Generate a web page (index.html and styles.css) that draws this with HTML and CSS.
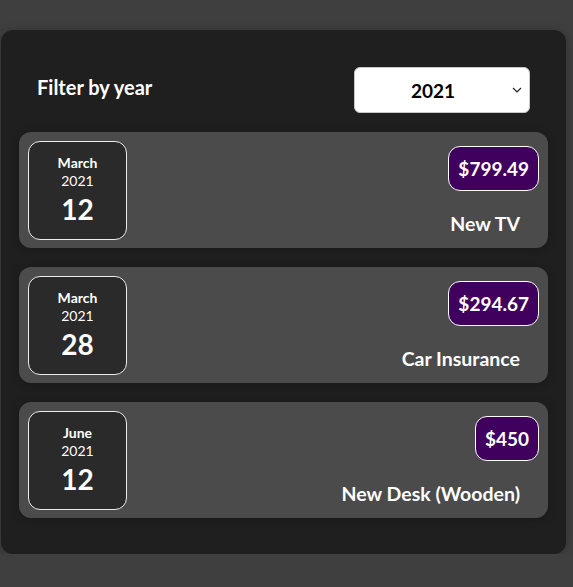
FILE: index.html
```html
<!DOCTYPE html>
<html lang="en">
<head>
    <meta charset="UTF-8">
    <meta name="viewport" content="width=device-width, initial-scale=1.0">
    <title>Expenses</title>
    <link rel="stylesheet" href="styles.css">
</head>
<body>
    <div class="expenses">
        <div class="expenses-filter">
            <div class="expenses-filter__control">
                <label for="year">Filter by year</label>
                <select id="year">
                    <option value="2022">2022</option>
                    <option value="2021" selected>2021</option>
                    <option value="2020">2020</option>
                    <option value="2019">2019</option>
                </select>
            </div>
        </div>

        <ul class="expenses-list">
            <li class="expense-item">
                <div class="expense-date">
                    <div class="expense-date__month">March</div>
                    <div class="expense-date__year">2021</div>
                    <div class="expense-date__day">12</div>
                </div>
                <div class="expense-item__description">
                    <div class="expense-item__price">$799.49</div>
                    <h2>New TV</h2>
                </div>
            </li>
            <li class="expense-item">
                <div class="expense-date">
                    <div class="expense-date__month">March</div>
                    <div class="expense-date__year">2021</div>
                    <div class="expense-date__day">28</div>
                </div>
                <div class="expense-item__description">
                    <div class="expense-item__price">$294.67</div>
                    <h2>Car Insurance</h2>
                </div>
            </li>
            <li class="expense-item">
                <div class="expense-date">
                    <div class="expense-date__month">June</div>
                    <div class="expense-date__year">2021</div>
                    <div class="expense-date__day">12</div>
                </div>
                <div class="expense-item__description">
                    <div class="expense-item__price">$450</div>
                    <h2>New Desk (Wooden)</h2>
                </div>
            </li>
        </ul>
    </div>
</body>
</html>
```

FILE: styles.css
```css
* {
    box-sizing: border-box;
}

body {
    margin: 0;
    background: #3f3f3f;
    font-family: Lato, "Open Sans", sans-serif;
}

.expenses {
    width: 565px;
    margin: 30px 0 0 1px;
    padding: 18px;
    background-color: #1f1f1f;
    border-radius: 12px;
    box-shadow: 0 1px 8px rgba(0, 0, 0, 0.25);
}

.expenses-filter {
    color: white;
    padding: 0 18px;
}

.expenses-filter__control {
    display: flex;
    align-items: center;
    justify-content: space-between;
    margin: 19px 0 19px;
}

.expenses-filter label {
    font-size: 20px;
    font-weight: bold;
    margin-top: -6px;
}

.expenses-filter select {
    width: 176px;
    height: 46px;
    padding: 0 0 0 56px;
    font-family: inherit;
    font-size: 19px;
    font-weight: bold;
    color: #000;
    background: #fff url("data:image/svg+xml;charset=UTF-8,%3csvg xmlns='http://www.w3.org/2000/svg' viewBox='0 0 10 6'%3e%3cpath d='M1 1l4 4 4-4' fill='none' stroke='%23222' stroke-width='1.2'/%3e%3c/svg%3e") no-repeat right 7px center / 10px 6px;
    border: 1px solid #c8c8c8;
    border-radius: 6px;
    appearance: none;
    -webkit-appearance: none;
}

.expenses-list {
    list-style: none;
    margin: 0 0 18px;
    padding: 0;
}

.expense-item {
    display: flex;
    justify-content: space-between;
    align-items: center;
    height: 116px;
    padding: 9px;
    margin-top: 19px;
    background-color: #4b4b4b;
    border-radius: 12px;
    box-shadow: 0 1px 8px rgba(0, 0, 0, 0.25);
}

.expense-item:first-child {
    margin-top: 0;
}

.expense-date {
    display: flex;
    flex-direction: column;
    align-items: center;
    justify-content: center;
    width: 99px;
    height: 99px;
    padding-top: 2px;
    border: 1px solid #ececec;
    border-radius: 12px;
    background-color: #2a2a2a;
    color: white;
}

.expense-date__month {
    font-size: 14px;
    font-weight: bold;
    line-height: 17px;
}

.expense-date__year {
    font-size: 14px;
    line-height: 19px;
}

.expense-date__day {
    font-size: 28px;
    font-weight: bold;
    line-height: 38px;
}

.expense-item__description {
    display: flex;
    flex-direction: column;
    align-items: flex-end;
    margin-top: 2px;
}

.expense-item__price {
    padding: 9px 9px;
    font-size: 19px;
    line-height: 25px;
    font-weight: bold;
    color: white;
    background-color: #40005d;
    border: 1px solid white;
    border-radius: 12px;
}

.expense-item h2 {
    margin: 21px 19px 0 0;
    font-size: 19.5px;
    line-height: 24px;
    color: white;
}
```
